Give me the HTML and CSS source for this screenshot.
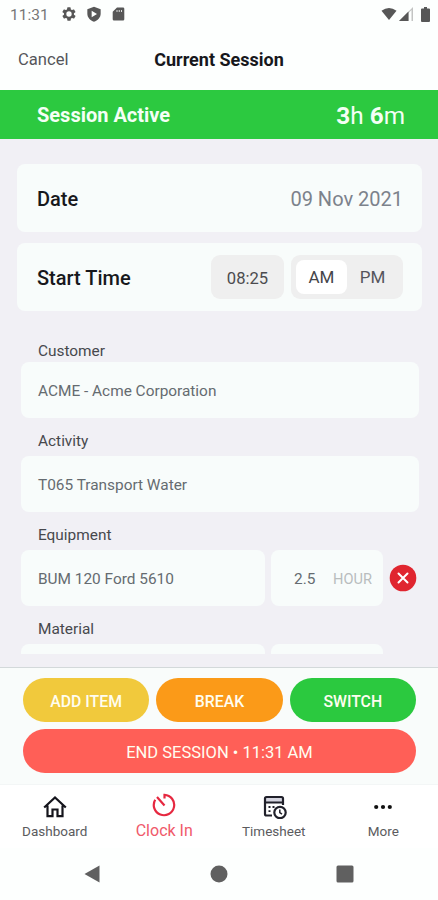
FILE: index.html
```
<!DOCTYPE html>
<html lang="en">

<head>
    <meta charset="UTF-8">
    <meta name="viewport" content="width=device-width, initial-scale=1.0">
    <title>Current Session</title>
    <link rel="stylesheet" href="styles.css">
</head>

<body>
    <div class="status-bar">
        <span class="clock">11:31</span>
        <svg class="status-gear" width="16" height="16" viewBox="0 0 24 24">
            <path fill-rule="evenodd" d="M19.4 13a7.500 7.500 0 0 0 0-2l2.100-1.600a.5.5 0 0 0 .1-.7l-2-3.400a.5.5 0 0 0-.6-.2l-2.500 1a7.300 7.300 0 0 0-1.700-1l-.4-2.600a.5.5 0 0 0-.5-.5h-4a.5.5 0 0 0-.5.5L9 5.100a7.300 7.300 0 0 0-1.700 1l-2.500-1a.5.5 0 0 0-.6.2l-2 3.400a.5.5 0 0 0 .1.7L4.500 11a7.500 7.500 0 0 0 0 2l-2.100 1.600a.5.5 0 0 0-.1.700l2 3.400c.1.2.4.3.6.2l2.500-1a7.300 7.300 0 0 0 1.700 1l.4 2.600c0 .3.200.5.500.5h4c.3 0 .5-.2.5-.5l.4-2.600a7.300 7.300 0 0 0 1.700-1l2.500 1c.2.1.5 0 .6-.2l2-3.400a.5.5 0 0 0-.1-.7zM12 8a4 4 0 1 1 0 8 4 4 0 0 1 0-8z"/>
        </svg>
        <svg class="status-shield" width="16" height="16" viewBox="0 0 24 24">
            <path fill-rule="evenodd" d="M12 1L2 5v6.500C2 17 6.500 21.800 12 23.500c5.500-1.700 10-6.500 10-12V5zM8.500 7l8 5-8 5z"/>
        </svg>
        <svg class="status-card" width="13" height="16" viewBox="0 0 13 16">
            <path fill-rule="evenodd" d="M5 1.500h6a1.300 1.300 0 0 1 1.300 1.300v10.400a1.300 1.300 0 0 1-1.300 1.300H2a1.300 1.300 0 0 1-1.300-1.300V5.800zM4.600 4h.8v2h-.8zM6.800 4h.8v2h-.8zM9 4h.8v2H9z"/>
        </svg>
        <span class="spacer"></span>
        <svg class="status-wifi" width="16" height="14" viewBox="0 0 17 14">
            <path d="M8.500 13.500L.5 3.500Q8.500-2.500 16.500 3.500z"/>
        </svg>
        <svg class="status-signal" width="14" height="14" viewBox="0 0 14 14">
            <path opacity=".35" d="M0 14L14 0v14h-1.500V3L9.500 6v8z"/>
            <path d="M0 14L9.500 4.500V14z"/>
        </svg>
        <svg class="status-battery" width="9" height="15" viewBox="0 0 9 15">
            <path d="M3 0h3v1.500h2a1 1 0 0 1 1 1V14a1 1 0 0 1-1 1H1a1 1 0 0 1-1-1V2.500a1 1 0 0 1 1-1h2z"/>
        </svg>
    </div>

    <div class="header">
        <span class="cancel">Cancel</span>
        <h1>Current Session</h1>
    </div>

    <div class="banner">
        <span class="banner-title">Session Active</span>
        <span class="banner-time"><b>3</b>h <b>6</b>m</span>
    </div>

    <div class="content">
        <div class="card">
            <span class="card-label">Date</span>
            <span class="card-value">09 Nov 2021</span>
        </div>
        <div class="card">
            <span class="card-label">Start Time</span>
            <div class="time-controls">
                <span class="time-box">08:25</span>
                <div class="toggle">
                    <span class="toggle-item active">AM</span>
                    <span class="toggle-item">PM</span>
                </div>
            </div>
        </div>

        <div class="form">
            <div class="form-group">
                <div class="form-label">Customer</div>
                <div class="field">ACME - Acme Corporation</div>
            </div>
            <div class="form-group">
                <div class="form-label">Activity</div>
                <div class="field">T065 Transport Water</div>
            </div>
            <div class="form-group">
                <div class="form-label">Equipment</div>
                <div class="field-row">
                    <div class="field field-name">BUM 120 Ford 5610</div>
                    <div class="field field-qty">
                        <span class="qty">2.5</span>
                        <span class="unit">HOUR</span>
                    </div>
                    <svg class="remove" width="28" height="28" viewBox="0 0 28 28">
                        <circle cx="14" cy="14" r="13.300" fill="#e0252f"/>
                        <path d="M9.500 9.500l9 9M18.500 9.500l-9 9" stroke="#fff" stroke-width="2" stroke-linecap="round"/>
                    </svg>
                </div>
            </div>
            <div class="form-group">
                <div class="form-label">Material</div>
                <div class="field-row">
                    <div class="field field-name"></div>
                    <div class="field field-qty"></div>
                </div>
            </div>
        </div>
    </div>

    <div class="actions">
        <div class="action-row">
            <div class="btn btn-yellow">ADD ITEM</div>
            <div class="btn btn-orange">BREAK</div>
            <div class="btn btn-green">SWITCH</div>
        </div>
        <div class="btn btn-red">END SESSION • 11:31 AM</div>
    </div>

    <div class="tabs">
        <div class="tab">
            <svg width="24" height="24" viewBox="0 0 24 24" fill="none" stroke="#15151c" stroke-width="2.200">
                <path d="M1.200 12.500L12 2.500l10.800 10M4.500 10.500v10.700h5v-6.700h5v6.700h5V10.500"/>
            </svg>
            <span>Dashboard</span>
        </div>
        <div class="tab tab-active">
            <svg width="24" height="24" viewBox="0 0 24 24" fill="none" stroke="#e62840" stroke-width="2.200">
                <path d="M12.500 5.500V1.800a10.200 10.200 0 1 1-9.300 5M5 4l7.500 8.500"/>
            </svg>
            <span>Clock In</span>
        </div>
        <div class="tab">
            <svg width="26" height="24" viewBox="0 0 26 24" fill="none" stroke="#20202a" stroke-width="2.200">
                <path d="M4 3h18v4.500H4z" fill="#d5d5e0" stroke="none"/>
                <path d="M11 20.500H5.500A1.500 1.500 0 0 1 4 19V3.500A1.500 1.500 0 0 1 5.500 2h15A1.500 1.500 0 0 1 22 3.500V10M4 7.500h18"/>
                <path d="M7.500 12h2M11.500 12h2M7.500 16.200h2" stroke-width="1.800"/>
                <circle cx="19" cy="17.500" r="5.700"/>
                <path d="M18.800 14.500v3.200l2.200 1.500" stroke-width="1.500"/>
            </svg>
            <span>Timesheet</span>
        </div>
        <div class="tab">
            <svg width="24" height="24" viewBox="0 0 24 24" fill="#111">
                <circle cx="5.200" cy="12" r="2.100"/>
                <circle cx="12" cy="12" r="2.100"/>
                <circle cx="18.800" cy="12" r="2.100"/>
            </svg>
            <span>More</span>
        </div>
    </div>

    <div class="nav-bar">
        <svg width="18" height="20" viewBox="0 0 18 20"><path d="M16.500 1.500v17L1.500 10z"/></svg>
        <svg width="18" height="18" viewBox="0 0 18 18"><circle cx="9" cy="9" r="8.500"/></svg>
        <svg width="18" height="18" viewBox="0 0 18 18"><rect x=".5" y=".5" width="17" height="17" rx="1.500"/></svg>
    </div>
</body>

</html>
```
FILE: styles.css
```
* {
    box-sizing: border-box;
}

body {
    font-family: Roboto, sans-serif;
    margin: 0;
    height: 900px;
    display: flex;
    flex-direction: column;
    background: #fdfffe;
    color: #17181c;
    overflow: hidden;
}

svg {
    display: block;
    flex-shrink: 0;
}

.status-bar {
    height: 28px;
    padding: 0 8px 0 10px;
    display: flex;
    align-items: center;
    fill: #575757;
}

.clock {
    padding-top: 1px;
    font-size: 15.5px;
    color: #777;
}

.status-gear {
    margin-left: 12px;
}

.status-shield {
    margin-left: 9px;
}

.status-card {
    margin-left: 10px;
}

.spacer {
    flex: 1;
}

.status-signal {
    margin-left: 2px;
}

.status-battery {
    margin-left: 8px;
}

.header {
    position: relative;
    height: 62px;
    padding: 0 18px;
    display: flex;
    align-items: center;
    justify-content: center;
}

.cancel {
    position: absolute;
    left: 18px;
    font-size: 16.6px;
    color: #55565a;
}

h1 {
    margin: 0;
    font-size: 18px;
    font-weight: 700;
}

.banner {
    height: 49px;
    padding: 0 33px 0 37px;
    display: flex;
    align-items: center;
    justify-content: space-between;
    background: #2cc940;
    color: #f4fff5;
}

.banner-title {
    font-size: 20px;
    font-weight: 700;
}

.banner-time {
    padding-top: 1px;
    font-size: 24.3px;
}

.content {
    height: 515px;
    padding: 25px 16px 0 17px;
    overflow: hidden;
    background: #f1f0f5;
}

.card {
    height: 68px;
    margin-bottom: 11px;
    padding: 0 19px 0 20px;
    display: flex;
    align-items: center;
    justify-content: space-between;
    background: #f8fcfb;
    border-radius: 8px;
}

.card-label,
.card-value {
    padding-top: 2px;
    font-size: 20px;
}

.card-label {
    font-weight: 500;
}

.card-value {
    color: #7c828b;
}

.time-controls {
    display: flex;
    gap: 7px;
}

.time-box {
    width: 73px;
    height: 44px;
    padding-top: 3px;
    display: flex;
    align-items: center;
    justify-content: center;
    background: #efefef;
    border-radius: 9px;
    font-size: 16.6px;
    color: #4b4b4e;
}

.toggle {
    width: 112px;
    height: 44px;
    padding: 5px;
    display: flex;
    background: #efefef;
    border-radius: 9px;
}

.toggle-item {
    flex: 1;
    display: flex;
    align-items: center;
    justify-content: center;
    border-radius: 8px;
    font-size: 17px;
    color: #55555c;
}

.toggle-item.active {
    background: #fff;
    color: #45454a;
}

.form {
    padding: 17px 3px 0 4px;
}

.form-group {
    height: 94px;
}

.form-label {
    height: 23px;
    padding-left: 17px;
    font-size: 15.4px;
    line-height: 17px;
    color: #47484d;
}

.form-group:first-child .form-label {
    line-height: 24px;
}

.field {
    height: 56px;
    padding: 2px 0 0 17px;
    display: flex;
    align-items: center;
    background: #f8fcfb;
    border-radius: 8px;
    font-size: 15.4px;
    color: #656b70;
}

.field-row {
    display: flex;
    align-items: center;
}

.field-name {
    width: 244px;
    margin-right: 6px;
}

.field-qty {
    width: 112px;
    padding: 2px 11px 0 23px;
    justify-content: space-between;
}

.unit {
    font-size: 14.6px;
    color: #b9bdbe;
}

.remove {
    margin-left: 6px;
}

.actions {
    height: 117px;
    margin-top: 13px;
    padding: 10px 22px 0 23px;
    display: flex;
    flex-direction: column;
    background: #f9fcfb;
    border-top: 1px solid #d3d9da;
    box-shadow: 0 -13px 0 #f1f0f5;
}

.action-row {
    display: flex;
    gap: 7px;
}

.btn {
    height: 44px;
    padding-top: 2px;
    flex: 1;
    display: flex;
    align-items: center;
    justify-content: center;
    border-radius: 22px;
    font-size: 15.8px;
    font-weight: 500;
    color: #fffdf0;
}

.btn-yellow {
    background: #f1c93c;
}

.btn-orange {
    background: #fb9a18;
}

.btn-green {
    background: #2bc93f;
}

.btn-red {
    flex: none;
    margin-top: 7px;
    background: #ff5f57;
    font-size: 16.5px;
    font-weight: 400;
}

.tabs {
    height: 64px;
    display: flex;
    background: #fff;
    border-top: 1px solid #f3f6f6;
}

.tab {
    flex: 1;
    padding-top: 10px;
    display: flex;
    flex-direction: column;
    align-items: center;
    font-size: 13.5px;
    color: #5b5b5e;
}

.tab span {
    margin-top: 4px;
}

.tab-active {
    padding-top: 8px;
    font-size: 16px;
    color: #f0596a;
}

.nav-bar {
    height: 52px;
    padding: 0 84px 0 83px;
    display: flex;
    align-items: center;
    justify-content: space-between;
    fill: #606060;
}
```
